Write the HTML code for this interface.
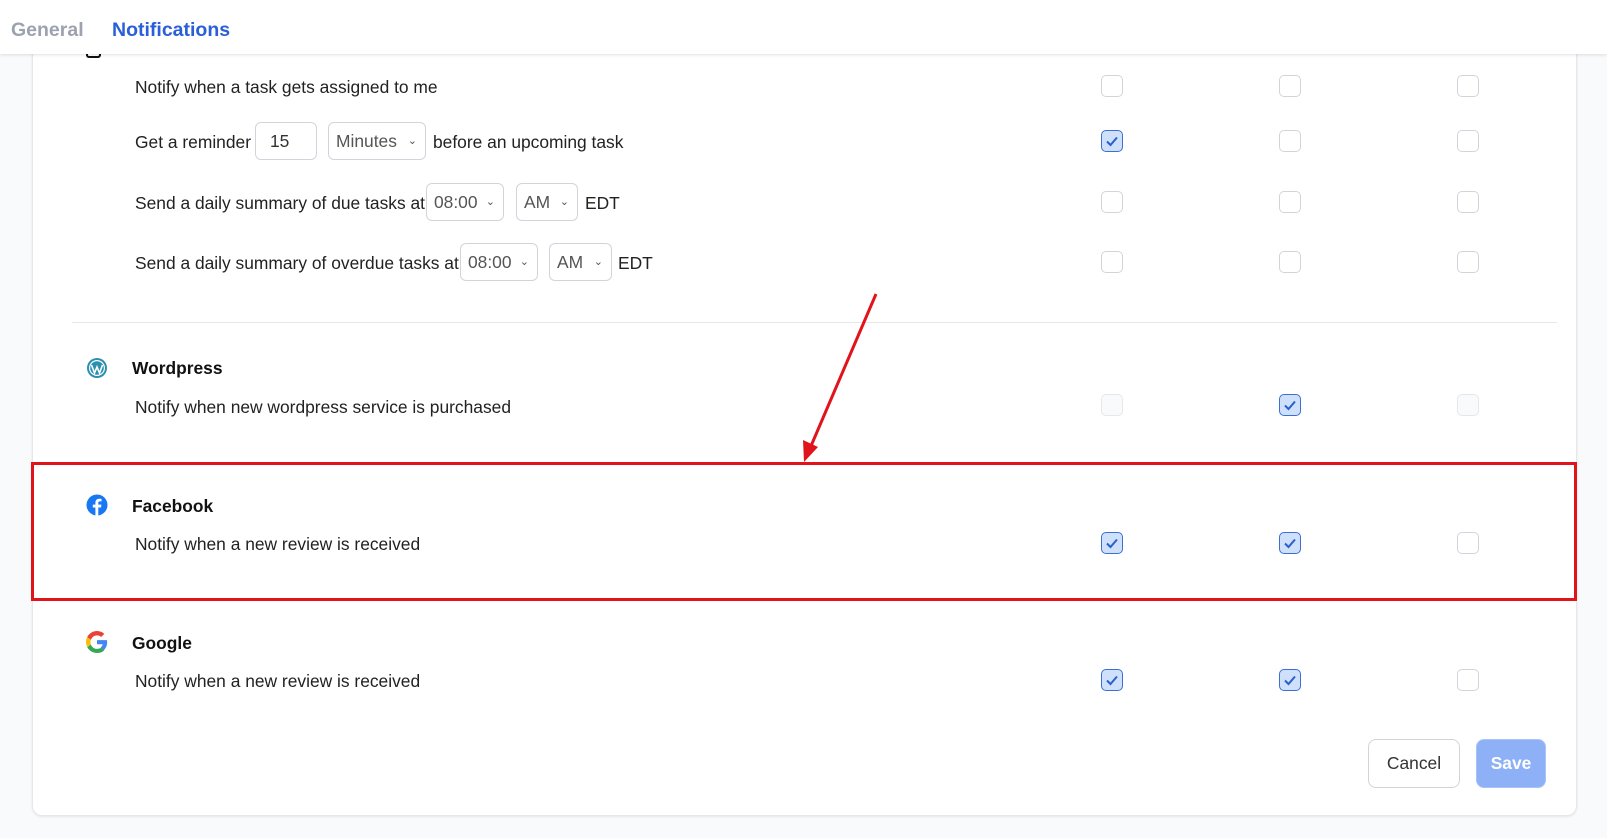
<!DOCTYPE html>
<html><head><meta charset="utf-8"><style>
*{box-sizing:border-box;margin:0;padding:0}
body{width:1607px;height:838px;background:#f9fafb;font-family:"Liberation Sans",sans-serif;color:#1f2328;position:relative;overflow:hidden}
.abs{position:absolute}
.card{left:32px;top:20px;width:1545px;height:796px;background:#fff;border:1px solid #e5e7eb;border-radius:10px;box-shadow:0 1px 2px rgba(0,0,0,.08)}
.header{left:0;top:0;width:1607px;height:54px;background:#fff;box-shadow:0 1px 3px rgba(0,0,0,.12);z-index:5}
.tab{top:19px;font-size:19.5px;font-weight:bold}
.t{font-size:17.4px;left:135px;line-height:20px;color:#222;top:1px}
.h{font-size:17.4px;font-weight:bold;left:132px;line-height:20px;color:#111}
.cb{width:22px;height:22px;border:1px solid #d1d5db;border-radius:5px;background:#fff}
.cb.dis{background:#f9fafb;border-color:#e5e7eb}
.cb.on{background:#cfe0fb;border-color:#3b6fd6}
.cb.on svg{position:absolute;left:3px;top:3px}
.box{border:1px solid #d1d5db;border-radius:6px;height:38px;font-size:17.4px;color:#555;line-height:36px;padding-left:7px;background:#fff}
.box .ch{position:absolute;right:8px;top:0;font-size:11px;color:#555}
.btn{border-radius:8px;font-size:17.4px;text-align:center;line-height:47px}
</style></head><body>
<div class="abs card"></div>
<div class="abs header">
 <div class="abs tab" style="left:11px;color:#9ca3af">General</div>
 <div class="abs tab" style="left:112px;color:#2b5fd9">Notifications</div>
</div>
<div class="abs" style="left:86px;top:50px;width:15px;height:8px;border:2px solid #111;border-top:none;border-radius:0 0 3px 3px;z-index:1"></div>

<div class="abs t" style="top:77px">Notify when a task gets assigned to me</div>
<div class="abs t" style="top:132px">Get a reminder</div>
<div class="abs box" style="left:255px;top:122px;width:62px;padding-left:14px;color:#333">15</div>
<div class="abs box" style="left:328px;top:122px;width:98px">Minutes<span class="ch">&#8964;</span></div>
<div class="abs t" style="left:433px;top:132px">before an upcoming task</div>

<div class="abs t" style="top:193px">Send a daily summary of due tasks at</div>
<div class="abs box" style="left:426px;top:183px;width:78px">08:00<span class="ch">&#8964;</span></div>
<div class="abs box" style="left:516px;top:183px;width:62px">AM<span class="ch">&#8964;</span></div>
<div class="abs t" style="left:585px;top:193px">EDT</div>

<div class="abs t" style="top:253px">Send a daily summary of overdue tasks at</div>
<div class="abs box" style="left:460px;top:243px;width:78px">08:00<span class="ch">&#8964;</span></div>
<div class="abs box" style="left:549px;top:243px;width:63px">AM<span class="ch">&#8964;</span></div>
<div class="abs t" style="left:618px;top:253px">EDT</div>

<div class="abs" style="left:72px;top:322px;width:1485px;height:1px;background:#e5e7eb"></div>

<svg class="abs" style="left:86px;top:357px" width="22" height="22" viewBox="0 0 22 22"><circle cx="11" cy="11" r="10" fill="#2a8fb0"/><circle cx="11" cy="11" r="8" fill="#fff"/><circle cx="11" cy="11" r="6.8" fill="#2a8fb0"/><path d="M5.5 8 L8.5 16 L11 10 L13.5 16 L16.5 8" stroke="#fff" stroke-width="1.6" fill="none"/></svg>
<div class="abs h" style="top:358px">Wordpress</div>
<div class="abs t" style="top:397px">Notify when new wordpress service is purchased</div>

<svg class="abs" style="left:86px;top:494px" width="22" height="22" viewBox="0 0 22 22"><circle cx="11" cy="11" r="10.5" fill="#1877f2"/><path d="M12.3 22 V13.5 H15 L15.4 10.6 H12.3 V8.8 C12.3 8 12.6 7.4 13.8 7.4 H15.5 V4.9 C15 4.8 14.2 4.7 13.3 4.7 C10.9 4.7 9.4 6.1 9.4 8.6 V10.6 H6.8 V13.5 H9.4 V22 Z" fill="#fff"/></svg>
<div class="abs h" style="top:496px">Facebook</div>
<div class="abs t" style="top:534px">Notify when a new review is received</div>

<svg class="abs" style="left:86px;top:631px" width="22" height="22" viewBox="0 0 48 48"><path fill="#EA4335" d="M24 9.5c3.5 0 6.6 1.2 9.1 3.6l6.8-6.8C35.8 2.4 30.2 0 24 0 14.6 0 6.6 5.4 2.7 13.3l7.9 6.1C12.5 13.7 17.8 9.5 24 9.5z"/><path fill="#4285F4" d="M46.1 24.5c0-1.6-.1-3.1-.4-4.5H24v9h12.4c-.5 2.900-2.2 5.3-4.6 7l7.3 5.6c4.3-4 7-9.9 7-17.1z"/><path fill="#FBBC05" d="M10.5 28.6c-.5-1.4-.8-3-.8-4.6s.3-3.2.8-4.6l-7.9-6.1C1 16.6 0 20.2 0 24s1 7.4 2.7 10.7l7.8-6.1z"/><path fill="#34A853" d="M24 48c6.5 0 11.9-2.1 15.9-5.8l-7.3-5.6c-2.2 1.5-5 2.4-8.6 2.4-6.2 0-11.5-4.2-13.400-9.900l-7.9 6.1C6.6 42.6 14.6 48 24 48z"/></svg>
<div class="abs h" style="top:633px">Google</div>
<div class="abs t" style="top:671px">Notify when a new review is received</div>

<div class="abs cb" style="left:1101px;top:75px"></div><div class="abs cb" style="left:1279px;top:75px"></div><div class="abs cb" style="left:1457px;top:75px"></div>
<div class="abs cb on" style="left:1101px;top:130px"><svg width="14" height="14" viewBox="0 0 14 14"><path d="M2 7.5 L5.5 11 L12 3.5" stroke="#2a5fcf" stroke-width="2" fill="none"/></svg></div><div class="abs cb" style="left:1279px;top:130px"></div><div class="abs cb" style="left:1457px;top:130px"></div>
<div class="abs cb" style="left:1101px;top:191px"></div><div class="abs cb" style="left:1279px;top:191px"></div><div class="abs cb" style="left:1457px;top:191px"></div>
<div class="abs cb" style="left:1101px;top:251px"></div><div class="abs cb" style="left:1279px;top:251px"></div><div class="abs cb" style="left:1457px;top:251px"></div>
<div class="abs cb dis" style="left:1101px;top:394px"></div><div class="abs cb on" style="left:1279px;top:394px"><svg width="14" height="14" viewBox="0 0 14 14"><path d="M2 7.5 L5.5 11 L12 3.5" stroke="#2a5fcf" stroke-width="2" fill="none"/></svg></div><div class="abs cb dis" style="left:1457px;top:394px"></div>
<div class="abs cb on" style="left:1101px;top:532px"><svg width="14" height="14" viewBox="0 0 14 14"><path d="M2 7.5 L5.5 11 L12 3.5" stroke="#2a5fcf" stroke-width="2" fill="none"/></svg></div><div class="abs cb on" style="left:1279px;top:532px"><svg width="14" height="14" viewBox="0 0 14 14"><path d="M2 7.5 L5.5 11 L12 3.5" stroke="#2a5fcf" stroke-width="2" fill="none"/></svg></div><div class="abs cb" style="left:1457px;top:532px"></div>
<div class="abs cb on" style="left:1101px;top:669px"><svg width="14" height="14" viewBox="0 0 14 14"><path d="M2 7.5 L5.5 11 L12 3.5" stroke="#2a5fcf" stroke-width="2" fill="none"/></svg></div><div class="abs cb on" style="left:1279px;top:669px"><svg width="14" height="14" viewBox="0 0 14 14"><path d="M2 7.5 L5.5 11 L12 3.5" stroke="#2a5fcf" stroke-width="2" fill="none"/></svg></div><div class="abs cb" style="left:1457px;top:669px"></div>

<div class="abs btn" style="left:1368px;top:739px;width:92px;height:49px;border:1px solid #d1d5db;background:#fff;color:#333">Cancel</div>
<div class="abs btn" style="left:1476px;top:739px;width:70px;height:49px;background:#8db0f7;color:#fff;font-weight:bold;border:1px solid #a9c2f7">Save</div>

<div class="abs" style="left:31px;top:462px;width:1546px;height:139px;border:3px solid #e0141a"></div>
<svg class="abs" style="left:0;top:0" width="1607" height="838"><line x1="876" y1="294" x2="811" y2="446" stroke="#e0141a" stroke-width="3"/><path d="M804 462 L803 440 L818 447 Z" fill="#e0141a"/></svg>
</body></html>
